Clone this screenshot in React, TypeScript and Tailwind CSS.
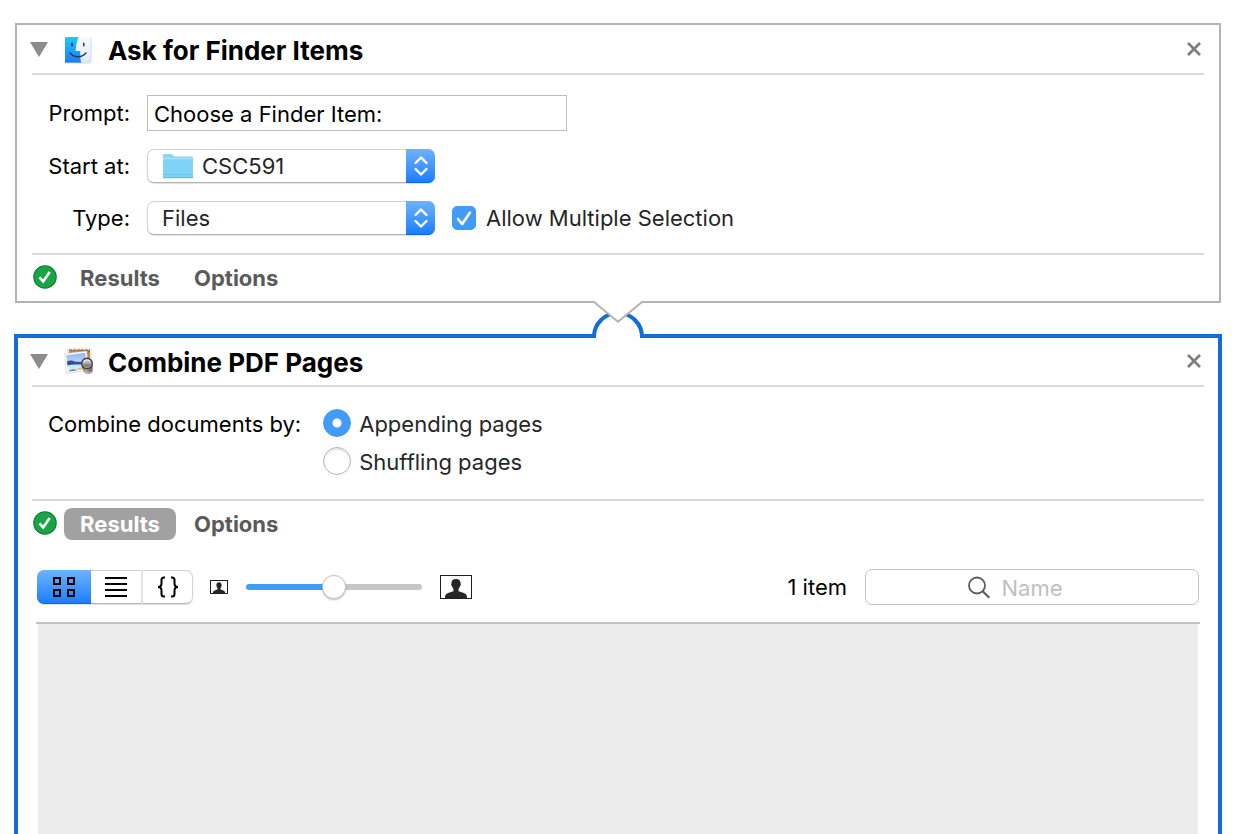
import { useState, type ReactNode } from "react";

function Divider() {
  return <hr className="border-0 h-0.5 bg-[#d9d9d9]" />;
}

function FinderIcon() {
  return (
    <svg width="28" height="28" viewBox="0 0 28 28" aria-hidden="true">
      <defs>
        <linearGradient id="finderBlue" x1="0" y1="0" x2="0" y2="1">
          <stop offset="0" stopColor="#1fc8fb" />
          <stop offset="1" stopColor="#2079ef" />
        </linearGradient>
        <linearGradient id="finderLight" x1="0" y1="0" x2="0" y2="1">
          <stop offset="0" stopColor="#fafafb" />
          <stop offset="1" stopColor="#dfe8f4" />
        </linearGradient>
      </defs>
      <rect x="1" y="1" width="26" height="26" rx="1" fill="url(#finderLight)" />
      <path d="M1 2a1 1 0 0 1 1-1h12.600C13 5 11.800 9.500 11.700 15h4.500c-.1 4 .2 8.500 1 12H2a1 1 0 0 1-1-1z" fill="url(#finderBlue)" />
      <path d="M27 2v24a1 1 0 0 1-1 1H2" fill="none" stroke="#c9d3df" strokeWidth=".8" />
      <path d="M8 7.300v2.400M19.800 7.300v2.400" stroke="#25384d" strokeWidth="1.500" strokeLinecap="round" />
      <path d="M6 17c4.500 5 11.500 5 16 0" fill="none" stroke="#1d3a5c" strokeWidth="1.300" strokeLinecap="round" />
    </svg>
  );
}

function PreviewIcon() {
  return (
    <svg width="32" height="28" viewBox="0 0 32 28" aria-hidden="true">
      <defs>
        <linearGradient id="previewSky" x1="0" y1="0" x2="0" y2="1">
          <stop offset="0" stopColor="#8cb8f2" />
          <stop offset="1" stopColor="#cfe1fa" />
        </linearGradient>
        <linearGradient id="previewBase" x1="0" y1="0" x2="1" y2="0">
          <stop offset="0" stopColor="#6b645e" />
          <stop offset=".4" stopColor="#b5ada4" />
          <stop offset="1" stopColor="#5d554e" />
        </linearGradient>
      </defs>
      <path d="M3.500 .8h23.700V19H5z" fill="#f7f2ea" stroke="#ddd5c8" strokeWidth=".6" />
      <path d="M5 2h21v15H6z" fill="#b48d54" />
      <path d="M5 2h21M16 2.800l9.500.8" stroke="#8c6534" strokeWidth="1.200" strokeDasharray="3 1" />
      <path d="M.6 5.800L22.600 3l2.200 19.200L2.500 25.500z" fill="#fff" stroke="#c9c9c9" strokeWidth=".6" />
      <path d="M2.300 7.200l19-2.400 1.200 10L3.500 18z" fill="url(#previewSky)" />
      <path d="M2.900 13.400c3.500-1.600 5-1 8.600.3l10.800.2.400 4.800L3.800 19z" fill="#35509e" />
      <path d="M3.600 17.300c4-.8 10-1.200 19-.5l.5 4L4.200 23.600z" fill="#cfe8f2" />
      <path d="M4.300 23.600c2.500-2.300 6-2.600 9.500-1.300z" fill="#3d8390" />
      <path d="M13 20.500l10-2.500.3 2.700-9 1.300z" fill="#dcc08e" />
      <path d="M17.500 17.500l2.300 6.500c1.300 2.800 7.700 2.600 8.700-.5l.2-6z" fill="url(#previewBase)" />
      <path d="M20 23.800c2 1.800 6 1.600 8-.4" fill="none" stroke="#cdc5bb" strokeWidth=".9" />
      <circle cx="23" cy="15.500" r="5.300" fill="#a9b5c3" stroke="#45403c" strokeWidth="1.400" />
      <path d="M18.800 15.800h8.400c-.3 4.800-7.800 5-8.400 0z" fill="#8e8272" />
      <path d="M19.700 14.300c1.200-2.800 4.800-3 6.300-.8" fill="none" stroke="#f3f7fb" strokeWidth="1.200" />
    </svg>
  );
}

function FolderIcon() {
  return (
    <svg width="32" height="26" viewBox="0 0 32 26" aria-hidden="true">
      <path d="M1 2a1 1 0 0 1 1-1h7.500c1.300 0 1.800 2.500 3.300 2.500H30a1 1 0 0 1 1 1V23H1z" fill="#8ed5f4" />
      <path d="M1 6h30v18.500H1z" fill="#7ed3f7" />
      <path d="M1 5.700h30" stroke="#a9e4fb" strokeWidth="1" />
      <path d="M1 21.500h30" stroke="#6cc2e8" strokeWidth=".7" />
      <path d="M1 24.700h30" stroke="#5faccf" strokeWidth="1" />
    </svg>
  );
}

function StatusIcon() {
  return (
    <svg className="mb-0.5 shrink-0" width="24" height="24" viewBox="0 0 24 24" role="img" aria-label="Succeeded">
      <circle cx="12" cy="12" r="11.200" fill="#1aa446" stroke="#128336" strokeWidth="1.200" />
      <path d="M6.500 12.300l3.700 4.200L16.700 7" fill="none" stroke="#fff" strokeWidth="2.600" />
    </svg>
  );
}

function PersonIcon({ width, height }: { width: number; height: number }) {
  return (
    <svg width={width} height={height} viewBox={`0 0 ${width} ${height}`} aria-hidden="true" className="shrink-0">
      <rect x=".5" y=".5" width={width - 1} height={height - 1} fill="#fff" stroke="#1f1f1f" />
      <svg x="0" y="0" width={width} height={height} viewBox="0 0 32 24" preserveAspectRatio="none">
        <path
          d="M16 4c3 0 4.600 1.600 4.600 4.200 0 .5.300.8.100 1.800-.2.900-.6 1-.8 1.600-.3 1.200-1 2-1.400 2.500v1.900c1.800 1.300 6.500 1.800 7.700 3.500.6.900.8 2 .8 3.500H5c0-1.500.200-2.600.8-3.500 1.200-1.700 5.900-2.200 7.700-3.500v-1.900c-.4-.5-1.100-1.300-1.400-2.500-.2-.6-.6-.7-.8-1.600-.2-1 .1-1.300.1-1.800C11.400 5.600 13 4 16 4z"
          fill="#262626"
        />
      </svg>
    </svg>
  );
}

function ActionHeader({ icon, title }: { icon: ReactNode; title: string }) {
  return (
    <header className="-mx-0.5 flex h-[47px] items-center pr-1">
      <button type="button" aria-label={`Collapse ${title}`} className="mr-4">
        <svg width="18" height="15" viewBox="0 0 18 15" className="block">
          <path d="M0 0h18L9 15z" fill="#8c8c8c" />
        </svg>
      </button>
      <span className="flex w-11 shrink-0">{icon}</span>
      <h2 className="flex-1 pt-0.5 text-[26px] leading-8 font-bold text-black">{title}</h2>
      <button type="button" aria-label={`Remove ${title}`} className="pb-0.5">
        <svg width="16" height="16" viewBox="0 0 16 16" className="block">
          <path d="M2 2l12 12M14 2L2 14" stroke="#7d7d7d" strokeWidth="2.600" />
        </svg>
      </button>
    </header>
  );
}

function ActionFooter({ resultsOpen, onToggle }: { resultsOpen: boolean; onToggle: () => void }) {
  return (
    <div className="flex h-[46px] items-center gap-1 pl-px font-bold text-[#5a5a5a]">
      <StatusIcon />
      <button
        type="button"
        aria-pressed={resultsOpen}
        onClick={onToggle}
        className={
          resultsOpen
            ? "ml-[3px] h-8 w-28 rounded-lg bg-[#a1a1a1] text-white"
            : "ml-[3px] h-8 w-28 rounded-lg"
        }
      >
        Results
      </button>
      <button type="button" className="h-8 rounded-lg px-3.5">
        Options
      </button>
    </div>
  );
}

function PopUp({ id, options, icon }: { id: string; options: string[]; icon?: ReactNode }) {
  return (
    <div className="relative w-72">
      <select
        id={id}
        className={
          icon
            ? "block h-[34px] w-full appearance-none rounded-[7px] border border-[#d2d2d2] border-b-[#b4b4b4] bg-white pr-9 pl-[54px] text-[#262626] shadow-[0_1px_1px_rgba(0,0,0,0.12)]"
            : "block h-[34px] w-full appearance-none rounded-[7px] border border-[#d2d2d2] border-b-[#b4b4b4] bg-white pr-9 pl-3.5 text-[#262626] shadow-[0_1px_1px_rgba(0,0,0,0.12)]"
        }
      >
        {options.map((o) => (
          <option key={o}>{o}</option>
        ))}
      </select>
      {icon && <span className="pointer-events-none absolute inset-y-0 left-[15px] flex items-center">{icon}</span>}
      <span className="pointer-events-none absolute inset-y-0 right-0 flex w-[29px] items-center justify-center rounded-r-[7px] border-b border-[#0a66f0] bg-linear-to-b from-[#6cb3fa] to-[#167dff]">
        <svg width="16" height="22" viewBox="0 0 16 22" aria-hidden="true">
          <path d="M2.500 8L8 2.500 13.500 8M2.500 14L8 19.500 13.500 14" fill="none" stroke="#fff" strokeWidth="2.400" strokeLinecap="round" strokeLinejoin="round" />
        </svg>
      </span>
    </div>
  );
}

function Connector() {
  return (
    <svg
      className="pointer-events-none absolute -top-[37px] left-1/2 -translate-x-1/2"
      width="56"
      height="38"
      viewBox="0 0 56 38"
      aria-hidden="true"
    >
      <path d="M4 38V36A24 24 0 0 1 52 36V38z" fill="#fff" />
      <path d="M4 37V36A24 24 0 0 1 52 36V37" fill="none" stroke="#126dd6" strokeWidth="4" />
      <path d="M4 -1V1L28 21 52 1V-1z" fill="#fff" />
      <path d="M2 1H4L28 20.700 52 1H54" fill="none" stroke="#b3b3b3" strokeWidth="2" />
    </svg>
  );
}

function Radio({ label, checked, onChange }: { label: string; checked: boolean; onChange: () => void }) {
  return (
    <label className="flex h-7 items-center gap-2 text-[#262626]">
      <input
        type="radio"
        name="combine"
        checked={checked}
        onChange={onChange}
        className="size-7 appearance-none rounded-full border border-[#b5b5b5] bg-white shadow-[inset_0_2px_2px_rgba(0,0,0,0.1)] checked:border-[#419cf9] checked:bg-[radial-gradient(circle,#fff_0_4px,#419cf9_5px)] checked:shadow-none"
      />
      <span className="pt-0.5">{label}</span>
    </label>
  );
}

const segments = [
  {
    name: "Icon view",
    shape: "w-[54px] rounded-l-[7px]",
    edge: "border-y border-l",
    drawing: <path d="M2 2h6v6H2zM16 2h6v6h-6zM2 14h6v6H2zM16 14h6v6h-6z" fill="none" stroke="currentColor" strokeWidth="2" />,
  },
  {
    name: "List view",
    shape: "w-[50px]",
    edge: "border-y",
    drawing: <path d="M1 2h22M1 8h22M1 14h22M1 20h22" fill="none" stroke="currentColor" strokeWidth="2" />,
  },
  {
    name: "Code view",
    shape: "w-[52px] rounded-r-[7px]",
    edge: "border-y border-r border-l-2 border-l-[#e2e2e2]",
    drawing: (
      <path
        d="M9 1.500H8C6 1.500 5.500 2.500 5.500 4v3.500C5.500 9.500 4.500 11 2 11c2.500 0 3.500 1.500 3.500 3.500V18c0 1.500.5 2.500 2.500 2.500h1M15 1.500h1c2 0 2.500 1 2.500 2.500v3.500c0 2 1 3.500 3.500 3.500-2.500 0-3.500 1.500-3.500 3.500V18c0 1.500-.5 2.500-2.500 2.500h-1"
        fill="none"
        stroke="currentColor"
        strokeWidth="2"
      />
    ),
  },
];

function ViewSwitch() {
  const [active, setActive] = useState(0);
  return (
    <div className="flex h-[34px] rounded-[7px] shadow-[0_1px_1px_rgba(0,0,0,0.12)]">
      {segments.map((s, i) => (
        <button
          key={s.name}
          type="button"
          aria-label={s.name}
          aria-pressed={i === active}
          onClick={() => setActive(i)}
          className={`flex items-center justify-center text-black ${s.shape} ${
            i === active
              ? "border-b border-[#0a66f0] bg-linear-to-b from-[#6cb3fa] to-[#167dff]"
              : `border-[#d2d2d2] border-b-[#b4b4b4] bg-white ${s.edge}`
          }`}
        >
          <svg width="24" height="22" viewBox="0 0 24 22">
            {s.drawing}
          </svg>
        </button>
      ))}
    </div>
  );
}

export default function App() {
  const [prompt, setPrompt] = useState("Choose a Finder Item:");
  const [multiple, setMultiple] = useState(true);
  const [mode, setMode] = useState("append");
  const [size, setSize] = useState(50);
  const [askResults, setAskResults] = useState(false);
  const [combineResults, setCombineResults] = useState(true);

  return (
    <main className="flex min-h-screen flex-col bg-white px-3.5 pt-[23px] font-['Inter','Liberation_Sans',sans-serif] text-[22px] leading-7 text-black">
      <section className="mx-px border-2 border-[#b3b3b3] px-[15px] pt-px">
        <ActionHeader icon={<FinderIcon />} title="Ask for Finder Items" />
        <Divider />
        <div className="grid grid-cols-[98px_1fr] items-center gap-x-[17px] gap-y-[18px] pt-5 pb-[18px]">
          <label htmlFor="prompt" className="text-right">
            Prompt:
          </label>
          <input
            id="prompt"
            type="text"
            value={prompt}
            onChange={(e) => setPrompt(e.target.value)}
            className="h-9 w-[420px] border border-[#bdbdbd] bg-white px-1.5 pt-0.5 outline-none"
          />
          <label htmlFor="start" className="text-right">
            Start at:
          </label>
          <PopUp id="start" options={["CSC591", "Desktop", "Documents"]} icon={<FolderIcon />} />
          <label htmlFor="type" className="text-right">
            Type:
          </label>
          <div className="flex items-center">
            <PopUp id="type" options={["Files", "Folders", "Files and Folders"]} />
            <label className="ml-[17px] flex items-center gap-2.5 text-[#262626]">
              <span className="grid">
                <input
                  type="checkbox"
                  checked={multiple}
                  onChange={(e) => setMultiple(e.target.checked)}
                  className="col-start-1 row-start-1 size-6 appearance-none rounded-[5px] border border-[#b5b5b5] bg-white checked:border-[#419cf9] checked:bg-[#419cf9]"
                />
                {multiple && (
                  <svg className="pointer-events-none col-start-1 row-start-1" width="24" height="24" viewBox="0 0 24 24" aria-hidden="true">
                    <path d="M6 13l4.200 5L18 6.500" fill="none" stroke="#fff" strokeWidth="2.600" strokeLinecap="round" strokeLinejoin="round" />
                  </svg>
                )}
              </span>
              Allow Multiple Selection
            </label>
          </div>
        </div>
        <Divider />
        <ActionFooter resultsOpen={askResults} onToggle={() => setAskResults(!askResults)} />
      </section>

      <section className="relative mt-[31px] flex flex-1 flex-col border-4 border-b-0 border-[#126dd6] px-3.5">
        <Connector />
        <ActionHeader icon={<PreviewIcon />} title="Combine PDF Pages" />
        <Divider />
        <div role="radiogroup" aria-labelledby="combine-label" className="flex gap-[22px] pt-[22px] pb-6 pl-4">
          <span id="combine-label" className="pt-px">
            Combine documents by:
          </span>
          <div className="flex flex-col gap-2.5">
            <Radio label="Appending pages" checked={mode === "append"} onChange={() => setMode("append")} />
            <Radio label="Shuffling pages" checked={mode === "shuffle"} onChange={() => setMode("shuffle")} />
          </div>
        </div>
        <Divider />
        <ActionFooter resultsOpen={combineResults} onToggle={() => setCombineResults(!combineResults)} />

        {combineResults && (
          <div className="flex flex-1 flex-col px-1">
            <div className="flex items-center pt-[22px] pr-px pb-[17px] pl-px">
              <ViewSwitch />
              <div className="ml-[17px] flex items-center gap-[18px]">
                <PersonIcon width={18} height={14} />
                <input
                  type="range"
                  aria-label="Icon size"
                  min={0}
                  max={100}
                  value={size}
                  onChange={(e) => setSize(Number(e.target.value))}
                  style={{ backgroundImage: `linear-gradient(to right, #419cf9 ${size}%, #c6c6c6 ${size}%)` }}
                  className="h-1.5 w-44 appearance-none rounded-full [&::-webkit-slider-thumb]:size-6 [&::-webkit-slider-thumb]:appearance-none [&::-webkit-slider-thumb]:rounded-full [&::-webkit-slider-thumb]:border [&::-webkit-slider-thumb]:border-[#c4c4c4] [&::-webkit-slider-thumb]:bg-white [&::-webkit-slider-thumb]:shadow-[0_1px_2px_rgba(0,0,0,0.25)]"
                />
                <PersonIcon width={32} height={24} />
              </div>
              <span className="ml-auto">1 item</span>
              <label className="ml-[18px] flex h-9 w-[334px] items-center justify-center gap-2.5 rounded-[7px] border border-[#c4c4c4] bg-white pt-0.5 pr-[34px]">
                <svg width="24" height="24" viewBox="0 0 24 24" aria-hidden="true" className="shrink-0">
                  <circle cx="10" cy="9.500" r="8" fill="none" stroke="#5c5c5c" strokeWidth="1.800" />
                  <path d="M15.700 15.200l6.600 6.600" stroke="#5c5c5c" strokeWidth="2.200" />
                </svg>
                <input
                  type="text"
                  aria-label="Filter by name"
                  placeholder="Name"
                  className="field-sizing-content max-w-64 bg-transparent outline-none placeholder:text-[#bfbfbf]"
                />
              </label>
            </div>
            <div className="h-0.5 bg-[#c2c2c2]" />
            <div className="mx-0.5 flex-1 bg-[#ececec]" />
          </div>
        )}
      </section>
    </main>
  );
}
